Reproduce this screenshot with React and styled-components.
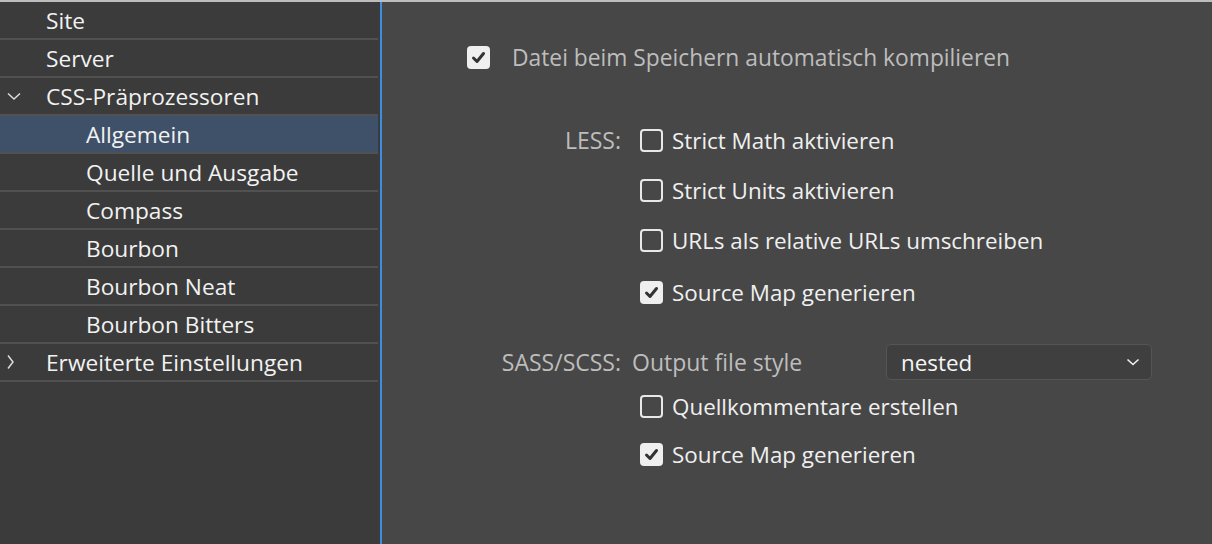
import React from "react";
import styled, { createGlobalStyle } from "styled-components";

const GlobalStyle = createGlobalStyle`
  html, body {
    margin: 0;
    padding: 0;
    background: #474747;
    font-family: "Open Sans", "Noto Sans", sans-serif;
  }
`;

const Window = styled.div`
  width: 1212px;
  height: 544px;
  display: flex;
  flex-direction: column;
  overflow: hidden;
  border-top: 2px solid #bdbdbd;
  box-sizing: border-box;
`;

const Body = styled.div`
  flex: 1;
  display: flex;
`;

const Sidebar = styled.nav`
  width: 380px;
  flex-shrink: 0;
  background: #3b3b3b;
  border-right: 2px solid #3d8ee0;
`;

const NavRow = styled.div`
  height: 36px;
  display: flex;
  align-items: center;
  border-bottom: 2px solid #515151;
  padding-left: ${({ $level }) => ($level === 2 ? 86 : 46)}px;
  position: relative;
  background: ${({ $active }) => ($active ? "#3f5169" : "transparent")};
  color: #f2f2f2;
  font-size: 22.7px;
  font-weight: 500;
  margin-right: 2px;
`;

const Twisty = styled.svg`
  position: absolute;
  left: 5px;
  top: 50%;
  transform: translateY(-50%);
`;

const Main = styled.main`
  flex: 1;
  padding: 37px 0 0 85px;
  font-size: 23px;
`;

const TopRow = styled.label`
  height: 36px;
  display: flex;
  align-items: center;
  gap: 22px;
  color: #bdbdbd;
  font-size: 22.8px;
`;

const Form = styled.div`
  margin-top: 40px;
  display: flex;
  flex-direction: column;
`;

const Row = styled.div`
  display: flex;
  align-items: center;
  height: ${({ $h }) => $h}px;
  margin-top: ${({ $mt }) => $mt || 0}px;
`;

const Label = styled.span`
  width: 154px;
  margin-right: 11px;
  text-align: right;
  color: #bdbdbd;
  flex-shrink: 0;
`;

const Option = styled.label`
  display: flex;
  align-items: center;
  gap: 9px;
  margin-left: 8px;
  color: #f0f0f0;
  font-weight: 500;
  font-size: 22.4px;
`;

const Box = styled.span`
  width: 23px;
  height: 23px;
  box-sizing: border-box;
  border-radius: 4px;
  display: inline-flex;
  align-items: center;
  justify-content: center;
  flex-shrink: 0;
  background: ${({ $checked }) => ($checked ? "#efefef" : "transparent")};
  border: ${({ $checked }) => ($checked ? "none" : "2px solid #e8e8e8")};
`;

const FieldName = styled.span`
  width: 254px;
  color: #bdbdbd;
`;

const Select = styled.div`
  width: 266px;
  height: 36px;
  box-sizing: border-box;
  border: 1px solid #555;
  border-radius: 5px;
  background: #3f3f3f;
  display: flex;
  align-items: center;
  justify-content: space-between;
  padding: 0 11px 0 14px;
  color: #f5f5f5;
  font-weight: 500;
  font-size: 22.4px;
`;

function Check() {
  return (
    <svg width="15" height="13" viewBox="0 0 15 13">
      <path d="M2.5 7 L6 10.5 L12.5 2.5" fill="none" stroke="#333" strokeWidth="3" strokeLinecap="round" strokeLinejoin="round" />
    </svg>
  );
}

function Checkbox({ checked }) {
  return <Box $checked={checked}>{checked && <Check />}</Box>;
}

const navItems = [
  { label: "Site" },
  { label: "Server" },
  { label: "CSS-Präprozessoren", twisty: "down" },
  { label: "Allgemein", level: 2, active: true },
  { label: "Quelle und Ausgabe", level: 2 },
  { label: "Compass", level: 2 },
  { label: "Bourbon", level: 2 },
  { label: "Bourbon Neat", level: 2 },
  { label: "Bourbon Bitters", level: 2 },
  { label: "Erweiterte Einstellungen", twisty: "right" },
];

export default function App() {
  return (
    <>
      <GlobalStyle />
      <Window>
        <Body>
          <Sidebar>
            {navItems.map((item) => (
              <NavRow key={item.label} $level={item.level} $active={item.active}>
                {item.twisty === "down" && (
                  <Twisty width="18" height="10" viewBox="0 0 18 10">
                    <path d="M3 2.5 L9 8 L15 2.5" fill="none" stroke="#dcdcdc" strokeWidth="1.5" />
                  </Twisty>
                )}
                {item.twisty === "right" && (
                  <Twisty width="10" height="18" viewBox="0 0 10 18">
                    <path d="M3 2.5 L8 9 L3 15.5" fill="none" stroke="#dcdcdc" strokeWidth="1.5" />
                  </Twisty>
                )}
                {item.label}
              </NavRow>
            ))}
          </Sidebar>
          <Main>
            <TopRow>
              <Checkbox checked />
              Datei beim Speichern automatisch kompilieren
            </TopRow>
            <Form>
              <Row $h={50}>
                <Label>LESS:</Label>
                <Option><Checkbox />Strict Math aktivieren</Option>
              </Row>
              <Row $h={50}>
                <Label />
                <Option><Checkbox />Strict Units aktivieren</Option>
              </Row>
              <Row $h={50}>
                <Label />
                <Option><Checkbox />URLs als relative URLs umschreiben</Option>
              </Row>
              <Row $h={50} $mt={2}>
                <Label />
                <Option><Checkbox checked />Source Map generieren</Option>
              </Row>
              <Row $h={36} $mt={27}>
                <Label>SASS/SCSS:</Label>
                <FieldName>Output file style</FieldName>
                <Select>
                  nested
                  <svg width="14" height="8" viewBox="0 0 14 8">
                    <path d="M1.5 1.5 L7 6.5 L12.5 1.5" fill="none" stroke="#f0f0f0" strokeWidth="1.6" />
                  </svg>
                </Select>
              </Row>
              <Row $h={40} $mt={6}>
                <Label />
                <Option><Checkbox />Quellkommentare erstellen</Option>
              </Row>
              <Row $h={40} $mt={8}>
                <Label />
                <Option><Checkbox checked />Source Map generieren</Option>
              </Row>
            </Form>
          </Main>
        </Body>
      </Window>
    </>
  );
}
